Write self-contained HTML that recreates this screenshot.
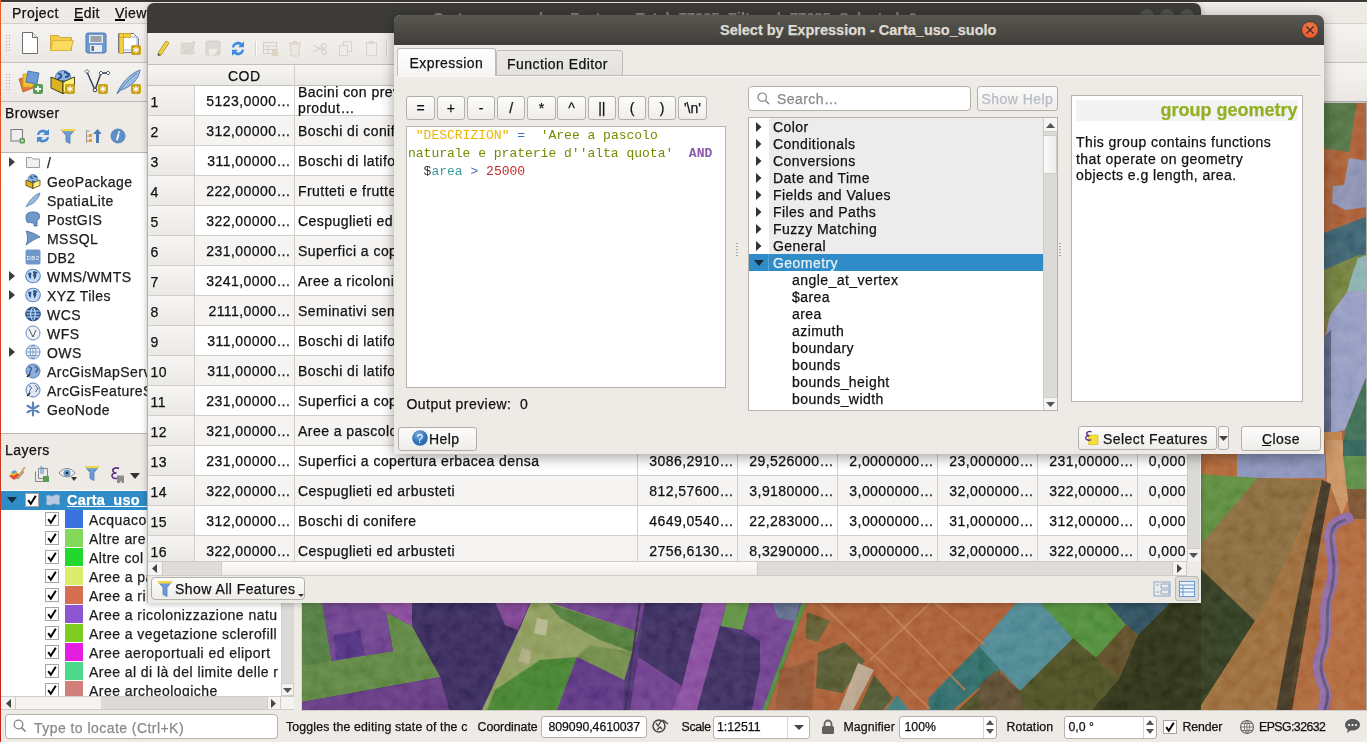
<!DOCTYPE html>
<html><head><meta charset="utf-8">
<style>
*{box-sizing:border-box;margin:0;padding:0}
html,body{width:1367px;height:742px;overflow:hidden}
body{position:relative;background:#eeebe7;font-family:"Liberation Sans",sans-serif;font-size:14px;letter-spacing:.45px;color:#1c1c1c;-webkit-text-stroke:.25px}
.a{position:absolute;line-height:0}
.t{position:absolute;white-space:nowrap;line-height:1}
svg{display:block}
.hl{position:absolute;height:1px;background:#cdcac5}
.vl{position:absolute;width:1px;background:#cdcac5}
.white{position:absolute;background:#fff}
.btn{position:absolute;border:1px solid #b3afa9;border-radius:3px;background:linear-gradient(#fcfcfb,#efedea)}
.mono{font-family:"Liberation Mono",monospace;font-size:13px;letter-spacing:0;-webkit-text-stroke:0}
.sb{position:absolute;background:#efedea}
</style></head><body>

<!-- ================= MAIN WINDOW ================= -->
<div class="a" style="left:0;top:0;width:1367px;height:2px;background:#3c3b37"></div>
<div class="a" style="left:0;top:2px;width:1367px;height:1px;background:#f7f6f4"></div>
<!-- toolbar bg -->
<div class="a" style="left:1px;top:24px;width:1366px;height:38px;background:linear-gradient(#f5f3f0,#ebe8e4)"></div><div class="a" style="left:1px;top:63px;width:1366px;height:38px;background:linear-gradient(#f5f3f0,#ebe8e4)"></div>
<div class="t" style="left:12px;top:6px;color:#111">Project</div>
<div class="t" style="left:74px;top:6px;color:#111">Edit</div>
<div class="t" style="left:115px;top:6px;color:#111">View</div>
<div class="a" style="left:34.5px;top:19.2px;width:3px;height:1.5px;background:#000"></div>
<div class="a" style="left:73.5px;top:19.2px;width:9px;height:1.5px;background:#000"></div>
<div class="a" style="left:115px;top:19.2px;width:10px;height:1.5px;background:#000"></div>
<div class="hl" style="left:1px;top:23px;width:1366px;background:#d3d0cb"></div>
<div class="hl" style="left:1px;top:62px;width:1366px;background:#c4c1bc"></div>
<div class="hl" style="left:1px;top:101px;width:1366px;background:#bdbab5"></div>
<!-- grips -->
<div class="a" style="left:5px;top:34px;width:5px;height:17px;background:radial-gradient(circle,#a9a6a0 0.6px,transparent 0.9px) 0 0/3px 3px"></div>
<div class="a" style="left:5px;top:73px;width:5px;height:17px;background:radial-gradient(circle,#a9a6a0 0.6px,transparent 0.9px) 0 0/3px 3px"></div>
<!-- toolbar icons row 1 -->
<div class="a" style="left:21px;top:31px"><svg width="18" height="24"><path d="M1.5 1.5h10l5 5v16h-15z" fill="#fff" stroke="#6d6d6d"/><path d="M11.5 1.5v5h5" fill="#eee" stroke="#6d6d6d"/></svg></div>
<div class="a" style="left:49px;top:33px"><svg width="26" height="20"><path d="M1.5 2.5h8l2 2h11v13h-21z" fill="#f3cb4a" stroke="#d2a93a"/><path d="M4 7.5h20.5l-3 10h-20z" fill="#fbdc5e" stroke="#d8b440"/></svg></div>
<div class="a" style="left:85px;top:32px"><svg width="22" height="22"><rect x="1" y="1" width="20" height="20" rx="2" fill="#6b9bd4" stroke="#4f7bb3"/><rect x="4" y="3" width="14" height="8" fill="#e8ecf0"/><path d="M5.5 5h11M5.5 7h11M5.5 9h11" stroke="#556"/><rect x="5" y="13" width="12" height="7" fill="#e8ecf0"/><rect x="6.5" y="14" width="2.5" height="5" fill="#4f6f9a"/></svg></div>
<div class="a" style="left:117px;top:31px"><svg width="26" height="25"><path d="M1.5 2.5h15l5 5v14h-20z" fill="#fff" stroke="#777"/><rect x="4" y="6" width="16" height="13" fill="none" stroke="#8fb0e8"/><path d="M2.5 2.5h4v20h-4zM2.5 2.5h11v4h-11z" fill="#f6cf3e" stroke="#c9a22a" stroke-width=".8"/><rect x="14" y="14" width="10" height="10" rx="2" fill="#c8a31a"/><path d="M19 15.8v6.4M16.2 17.4l5.6 3.2M16.2 20.6l5.6-3.2" stroke="#fff" stroke-width="1.2"/></svg></div>
<!-- toolbar icons row 2 -->
<div class="a" style="left:17px;top:69px"><svg width="28" height="26"><path d="M2 10l10-3 4 12-10 4z" fill="#e07a38" stroke="#b85a20" stroke-width=".8"/><path d="M6 5h10v13h-10z" fill="#f1c232" stroke="#c9a22a" stroke-width=".8"/><path d="M11 2l11 2-2 11-11-2z" fill="#6a9bd6" stroke="#3f6aa0" stroke-width=".8"/><rect x="16" y="15" width="10" height="10" rx="2" fill="#5a9c55"/><path d="M21 17v6M18 20h6" stroke="#fff" stroke-width="1.8"/></svg></div>
<div class="a" style="left:48px;top:67px"><svg width="28" height="28"><circle cx="15" cy="11.5" r="8" fill="#8fb3e0" stroke="#4a72a8" stroke-width=".8"/><path d="M10 7c2-1 4 1 3 3-1 1-3 1-3 3M16 5c2 0 3 2 5 2 0 2-2 3-4 3M13 15c1-1 3-1 4 0" stroke="#2c548c" stroke-width="2" fill="none"/><path d="M3 10l12 5v11.7L3 21z" fill="#d8b420" stroke="#3a3208" stroke-width=".9" stroke-linejoin="round"/><path d="M15 15l11.5-5v11l-11.5 5.7z" fill="#fbf07a" stroke="#3a3208" stroke-width=".9" stroke-linejoin="round"/><rect x="17" y="17" width="10" height="10" rx="2" fill="#c8a31a"/><path d="M22 18.8v6.4M19.2 20.4l5.6 3.2M19.2 23.6l5.6-3.2" stroke="#fff" stroke-width="1.2"/></svg></div>
<div class="a" style="left:83px;top:68px"><svg width="28" height="28"><path d="M4 4l8 18 6-17 8 0" fill="none" stroke="#2c3e50" stroke-width="1.4"/><circle cx="12" cy="22" r="1.8" fill="#fff" stroke="#2c3e50"/><path d="M4 1.5l2 2-2 2-2-2zM18 3l2 2-2 2-2-2zM25 3l2 2-2 2-2-2z" fill="#fff" stroke="#2c3e50" stroke-width=".8"/><rect x="15" y="16" width="10" height="10" rx="2" fill="#c8a31a"/><path d="M20 17.8v6.4M17.2 19.4l5.6 3.2M17.2 22.6l5.6-3.2" stroke="#fff" stroke-width="1.2"/></svg></div>
<div class="a" style="left:115px;top:68px"><svg width="28" height="28"><path d="M2 26C5 17 14 6 25 2c-1 9-9 17-19 20z" fill="#9cbbe0" stroke="#4f78aa" stroke-width=".9"/><path d="M2 26C8 18 15 10 22 5" stroke="#4f78aa" stroke-width=".8" fill="none"/><rect x="16" y="16" width="10" height="10" rx="2" fill="#c8a31a"/><path d="M21 17.8v6.4M18.2 19.4l5.6 3.2M18.2 22.6l5.6-3.2" stroke="#fff" stroke-width="1.2"/></svg></div>

<!-- browser dock -->
<div class="t" style="left:5px;top:105.5px;color:#111">Browser</div>
<div class="a" style="left:10px;top:128px"><svg width="16" height="17"><rect x="1" y="1.5" width="11.5" height="11.5" fill="#eeeeee" stroke="#7a7a7a"/><rect x="9.5" y="10" width="5.5" height="5.5" rx="1.5" fill="#5b9a55"/><circle cx="12.25" cy="12.75" r="1.5" fill="#b8d8b0"/></svg></div>
<div class="a" style="left:35px;top:128px"><svg width="16" height="16"><path d="M2 7a6 6 0 0 1 10-4l2-2v6h-6l2-2a4 4 0 0 0-6 2zM14 9a6 6 0 0 1-10 4l-2 2v-6h6l-2 2a4 4 0 0 0 6-2z" fill="#4a8ad4"/></svg></div>
<div class="a" style="left:60px;top:128px"><svg width="16" height="16"><path d="M1 1.5h14l-5 6v8l-4-2v-6z" fill="#6b9bd4" stroke="#4f7bb3" stroke-width=".8"/><rect x="1" y="1" width="14" height="2.2" fill="#f3d54a"/></svg></div>
<div class="a" style="left:85px;top:128px"><svg width="16" height="16"><path d="M1.5 2v13M1.5 3h3M1.5 8h3M1.5 13h3" stroke="#999" fill="none"/><rect x="4" y="6" width="3" height="3" fill="#f39c12"/><rect x="4" y="11" width="3" height="3" fill="#f39c12"/><path d="M11 15V6h-3l4.5-5 4.5 5h-3v9z" fill="#4f7bb3"/></svg></div>
<div class="a" style="left:110px;top:128px"><svg width="16" height="16"><circle cx="8" cy="8" r="7" fill="#5f8fc8" stroke="#4a78b0" stroke-width=".8"/><path d="M8.5 6.5l-1.5 5M9 4.2v.2" stroke="#fff" stroke-width="1.8" stroke-linecap="round"/></svg></div>
<div class="hl" style="left:1px;top:152px;width:297px;background:#b9b5b0"></div>
<div class="white" style="left:1px;top:153px;width:297px;height:280px"></div>
<div class="hl" style="left:1px;top:433px;width:297px;background:#b9b5b0"></div>
<div class="a" style="left:9px;top:157px;line-height:0"><svg width="6" height="10"><path d="M0 0l6 5-6 5z" fill="#3c3c3c"/></svg></div>
<div class="a" style="left:25px;top:154px;line-height:0"><svg width="16" height="16"><path d="M1.5 3.5h5l1.5 1.5h6.5v8.5h-13z" fill="#f1f0ee" stroke="#a09d98"/></svg></div>
<div class="t" style="left:47px;top:156px">/</div>
<div class="a" style="left:25px;top:173px;line-height:0"><svg width="16" height="16"><circle cx="8" cy="6.5" r="5" fill="#8fb3e0" stroke="#4a72a8" stroke-width=".7"/><path d="M5 4c1.5-.5 2.5.5 2 2M9 3c1 .5 2 1 3 1M7 8.5c1 0 2 0 2.5-.5" stroke="#2c548c" stroke-width="1.4" fill="none"/><path d="M1 7l7 3v5.5L1 12.5z" fill="#d8b420" stroke="#3a3208" stroke-width=".7" stroke-linejoin="round"/><path d="M8 10l7-3v5.5L8 15.5z" fill="#fbf07a" stroke="#3a3208" stroke-width=".7" stroke-linejoin="round"/></svg></div>
<div class="t" style="left:47px;top:175px">GeoPackage</div>
<div class="a" style="left:25px;top:192px;line-height:0"><svg width="16" height="16"><path d="M1 15C4 9 9 3 15 1c-1 5-6 11-11 12z" fill="#9ab8dc" stroke="#5078a8" stroke-width=".8"/></svg></div>
<div class="t" style="left:47px;top:194px">SpatiaLite</div>
<div class="a" style="left:25px;top:211px;line-height:0"><svg width="16" height="16"><path d="M3 2c3-1.5 7-1.5 10 0 2 1 2 4 1 6-1 1-2 1-2 3v4h-3v-3c-1 0-3 0-4-1-1 1-2 1-3 0C1 9 0 4 3 2z" fill="#6f97c9" stroke="#40689c" stroke-width=".8"/></svg></div>
<div class="t" style="left:47px;top:213px">PostGIS</div>
<div class="a" style="left:25px;top:230px;line-height:0"><svg width="16" height="16"><path d="M1 1c5 1 10 3 14 6-3 1-7 3-14 8 2-4 2-10 0-14z" fill="#6f97c9" stroke="#40689c" stroke-width=".8"/></svg></div>
<div class="t" style="left:47px;top:232px">MSSQL</div>
<div class="a" style="left:25px;top:249px;line-height:0"><svg width="16" height="16"><rect x="0.5" y="0.5" width="15" height="15" rx="2" fill="#6f97c9"/><text x="8" y="10.5" font-size="6" fill="#fff" text-anchor="middle" font-family="Liberation Sans">DB2</text></svg></div>
<div class="t" style="left:47px;top:251px">DB2</div>
<div class="a" style="left:9px;top:271px;line-height:0"><svg width="6" height="10"><path d="M0 0l6 5-6 5z" fill="#3c3c3c"/></svg></div>
<div class="a" style="left:25px;top:268px;line-height:0"><svg width="16" height="16"><ellipse cx="8" cy="8" rx="7.3" ry="6.8" fill="#c6daf0" stroke="#5a88c0" stroke-width="1.1"/><path d="M3 5.5c1-1 3-1.5 3.5 0 .3 1-1 1.2-.5 2.5.4 1.3 0 2.5-.8 3-.5-1.5-1.8-2-1.5-3.5zM8 3.5c1.5-.5 3 0 4.5 1 .5 1-1 1-1.5 1.5-.2.8 1 1.5.2 2.5-.8 1.2-1 2.5-1.8 3-.5-1.5-.3-3-1.2-3.5-.8-.8.2-1.5.5-2-.5-.8-1-1.5-.7-2.5z" fill="#2c548c"/></svg></div>
<div class="t" style="left:47px;top:270px">WMS/WMTS</div>
<div class="a" style="left:9px;top:290px;line-height:0"><svg width="6" height="10"><path d="M0 0l6 5-6 5z" fill="#3c3c3c"/></svg></div>
<div class="a" style="left:25px;top:287px;line-height:0"><svg width="16" height="16"><ellipse cx="8" cy="8" rx="7.3" ry="6.8" fill="#c6daf0" stroke="#5a88c0" stroke-width="1.1"/><path d="M3 5.5c1-1 3-1.5 3.5 0 .3 1-1 1.2-.5 2.5.4 1.3 0 2.5-.8 3-.5-1.5-1.8-2-1.5-3.5zM8 3.5c1.5-.5 3 0 4.5 1 .5 1-1 1-1.5 1.5-.2.8 1 1.5.2 2.5-.8 1.2-1 2.5-1.8 3-.5-1.5-.3-3-1.2-3.5-.8-.8.2-1.5.5-2-.5-.8-1-1.5-.7-2.5z" fill="#2c548c"/></svg></div>
<div class="t" style="left:47px;top:289px">XYZ Tiles</div>
<div class="a" style="left:25px;top:306px;line-height:0"><svg width="16" height="16"><ellipse cx="8" cy="8" rx="7.3" ry="6.8" fill="#2d5a94" stroke="#1e3f6e" stroke-width="1"/><path d="M1.5 5h13M1.5 8h13M1.5 11h13" stroke="#8fb3e0" stroke-width="1.3"/><path d="M8 1.5c-3 2-3 11 0 13M8 1.5c3 2 3 11 0 13" stroke="#d8e6f6" stroke-width="1" fill="none"/></svg></div>
<div class="t" style="left:47px;top:308px">WCS</div>
<div class="a" style="left:25px;top:325px;line-height:0"><svg width="16" height="16"><circle cx="8" cy="8" r="7" fill="#eef2f8" stroke="#6a8fc0"/><path d="M4 4l4 8 3-7" stroke="#555" fill="none"/></svg></div>
<div class="t" style="left:47px;top:327px">WFS</div>
<div class="a" style="left:9px;top:347px;line-height:0"><svg width="6" height="10"><path d="M0 0l6 5-6 5z" fill="#3c3c3c"/></svg></div>
<div class="a" style="left:25px;top:344px;line-height:0"><svg width="16" height="16"><circle cx="8" cy="8" r="7" fill="#eef2f8" stroke="#6a8fc0"/><path d="M1 8h14M8 1v14M2.5 4.5h11M2.5 11.5h11M8 1c-4 3-4 11 0 14M8 1c4 3 4 11 0 14" stroke="#6a8fc0" stroke-width=".8" fill="none"/></svg></div>
<div class="t" style="left:47px;top:346px">OWS</div>
<div class="a" style="left:25px;top:363px;line-height:0"><svg width="16" height="16"><circle cx="8" cy="8" r="7" fill="#8fb0da" stroke="#5a7fb0"/><path d="M4 4c2 0 3 2 2 3s-2 2-1 4M10 3c1 2 3 2 3 4-1 0-2 1-2 3" stroke="#3a5f90" stroke-width="1.3" fill="none"/><path d="M2 14l3-3" stroke="#222" stroke-width="1.5"/></svg></div>
<div class="t" style="left:47px;top:365px">ArcGisMapServer</div>
<div class="a" style="left:25px;top:382px;line-height:0"><svg width="16" height="16"><circle cx="8" cy="8" r="7" fill="#dfe8f4" stroke="#5a7fb0"/><path d="M4 4c2 0 3 2 2 3s-2 2-1 4M10 3c1 2 3 2 3 4-1 0-2 1-2 3" stroke="#3a5f90" stroke-width="1" fill="none"/><path d="M2 14l3-3" stroke="#222" stroke-width="1.5"/></svg></div>
<div class="t" style="left:47px;top:384px">ArcGisFeatureServer</div>
<div class="a" style="left:25px;top:401px;line-height:0"><svg width="16" height="16"><g stroke="#5a84bb" stroke-width="2.2" stroke-linecap="round"><path d="M8 1.5v13M2.5 4.8l11 6.4M2.5 11.2l11-6.4"/></g></svg></div>
<div class="t" style="left:47px;top:403px">GeoNode</div>

<!-- layers dock -->
<div class="t" style="left:5px;top:443.3px;color:#111">Layers</div>
<div class="a" style="left:8px;top:466px"><svg width="18" height="16"><path d="M1 10l7-4 4 3-6 5z" fill="#e74c3c"/><path d="M2 8l5-3 3 2-5 3z" fill="#f1c40f"/><path d="M3 6l4-2 2 2-4 2z" fill="#6b9bd4"/><path d="M8 12l6-7 2 1-6 7z" fill="#c9a06a" stroke="#8a6a3a" stroke-width=".5"/><path d="M14 5l3-4" stroke="#c9a06a" stroke-width="1.5"/></svg></div>
<div class="a" style="left:34px;top:465px"><svg width="16" height="18"><path d="M1.5 6.5v10h9M4.5 3.5v10h9v-10z" fill="none" stroke="#888"/><path d="M7 1v8M9 2v7" stroke="#6b9bd4" stroke-width="1.2"/><rect x="9" y="11" width="6" height="6" fill="#5a9c55"/></svg></div>
<div class="a" style="left:58px;top:466px"><svg width="20" height="16"><path d="M1 7c4-6 12-6 16 0-4 5-12 5-16 0z" fill="#eee" stroke="#888"/><circle cx="9" cy="7" r="3.5" fill="#6b9bd4"/><circle cx="9" cy="7" r="1.3" fill="#222"/><path d="M13 11h6l-3 4z" fill="#333"/></svg></div>
<div class="a" style="left:84px;top:465px"><svg width="16" height="17"><path d="M1 1.5h14l-5 6v8l-4-2v-6z" fill="#6b9bd4" stroke="#4f7bb3" stroke-width=".8"/><rect x="1" y="1" width="14" height="2.2" fill="#f3d54a"/></svg></div>
<div class="a" style="left:110px;top:466px"><svg width="17" height="18"><path d="M9 2.5C6 1 2 2.5 3 5.2 3.5 6.6 5.2 6.9 6.4 6.9 4.2 6.9 1.5 7.7 2 10.2 2.5 12.8 6.2 13 8.6 11.8" fill="none" stroke="#5c2d82" stroke-width="1.6"/><path d="M7 9.5h7v7.5h-2l-1-2.5-1 2.5h-3z" fill="#8c8c8c"/></svg></div>
<div class="a" style="left:130px;top:473px"><svg width="10" height="6"><path d="M0 0h10l-5 6z" fill="#333"/></svg></div>
<div class="white" style="left:1px;top:490px;width:280px;height:206px"></div>
<div class="a" style="left:1px;top:491px;width:280px;height:19px;background:#308cc6"></div>
<div class="a" style="left:7px;top:497px"><svg width="10" height="6"><path d="M0 0h10l-5 6z" fill="#152a3a"/></svg></div>
<div class="a" style="left:25px;top:493px"><svg width="14" height="14"><rect x=".5" y=".5" width="13" height="13" fill="#fff" stroke="#a8a49e"/><path d="M3.2 7.2l2.6 3.6L10.8 2.8" stroke="#000" stroke-width="2" fill="none"/></svg></div>
<div class="a" style="left:45px;top:494px"><svg width="16" height="12"><path d="M1 2c3-2 5 1 7 0s4-2 7 0c-1 3-1 5 0 8-3 2-5-1-7 0s-4 2-7 0c1-3 1-5 0-8z" fill="#b9cbe0" stroke="#8aa4c4" stroke-width=".6"/></svg></div>
<div class="t" style="left:67px;top:493px;color:#fff;font-weight:bold;font-size:14.5px;letter-spacing:.2px;text-decoration:underline">Carta_uso_suolo</div>
<div class="a" style="left:45px;top:512px;line-height:0"><svg width="14" height="14"><rect x=".5" y=".5" width="13" height="13" fill="#fff" stroke="#a8a49e"/><path d="M3.2 7.2l2.6 3.6L10.8 2.8" stroke="#000" stroke-width="2" fill="none"/></svg></div>
<div class="a" style="left:65px;top:510px;width:18px;height:18px;background:#3a72e0"></div>
<div class="t" style="left:89px;top:513px">Acquaco</div>
<div class="a" style="left:45px;top:531px;line-height:0"><svg width="14" height="14"><rect x=".5" y=".5" width="13" height="13" fill="#fff" stroke="#a8a49e"/><path d="M3.2 7.2l2.6 3.6L10.8 2.8" stroke="#000" stroke-width="2" fill="none"/></svg></div>
<div class="a" style="left:65px;top:529px;width:18px;height:18px;background:#84d85a"></div>
<div class="t" style="left:89px;top:532px">Altre are</div>
<div class="a" style="left:45px;top:550px;line-height:0"><svg width="14" height="14"><rect x=".5" y=".5" width="13" height="13" fill="#fff" stroke="#a8a49e"/><path d="M3.2 7.2l2.6 3.6L10.8 2.8" stroke="#000" stroke-width="2" fill="none"/></svg></div>
<div class="a" style="left:65px;top:548px;width:18px;height:18px;background:#22d82e"></div>
<div class="t" style="left:89px;top:551px">Altre col</div>
<div class="a" style="left:45px;top:569px;line-height:0"><svg width="14" height="14"><rect x=".5" y=".5" width="13" height="13" fill="#fff" stroke="#a8a49e"/><path d="M3.2 7.2l2.6 3.6L10.8 2.8" stroke="#000" stroke-width="2" fill="none"/></svg></div>
<div class="a" style="left:65px;top:567px;width:18px;height:18px;background:#dceb6c"></div>
<div class="t" style="left:89px;top:570px">Aree a pa</div>
<div class="a" style="left:45px;top:588px;line-height:0"><svg width="14" height="14"><rect x=".5" y=".5" width="13" height="13" fill="#fff" stroke="#a8a49e"/><path d="M3.2 7.2l2.6 3.6L10.8 2.8" stroke="#000" stroke-width="2" fill="none"/></svg></div>
<div class="a" style="left:65px;top:586px;width:18px;height:18px;background:#d66e52"></div>
<div class="t" style="left:89px;top:589px">Aree a ri</div>
<div class="a" style="left:45px;top:607px;line-height:0"><svg width="14" height="14"><rect x=".5" y=".5" width="13" height="13" fill="#fff" stroke="#a8a49e"/><path d="M3.2 7.2l2.6 3.6L10.8 2.8" stroke="#000" stroke-width="2" fill="none"/></svg></div>
<div class="a" style="left:65px;top:605px;width:18px;height:18px;background:#8e55d0"></div>
<div class="t" style="left:89px;top:608px">Aree a ricolonizzazione natu</div>
<div class="a" style="left:45px;top:626px;line-height:0"><svg width="14" height="14"><rect x=".5" y=".5" width="13" height="13" fill="#fff" stroke="#a8a49e"/><path d="M3.2 7.2l2.6 3.6L10.8 2.8" stroke="#000" stroke-width="2" fill="none"/></svg></div>
<div class="a" style="left:65px;top:624px;width:18px;height:18px;background:#7ccc22"></div>
<div class="t" style="left:89px;top:627px">Aree a vegetazione sclerofill</div>
<div class="a" style="left:45px;top:645px;line-height:0"><svg width="14" height="14"><rect x=".5" y=".5" width="13" height="13" fill="#fff" stroke="#a8a49e"/><path d="M3.2 7.2l2.6 3.6L10.8 2.8" stroke="#000" stroke-width="2" fill="none"/></svg></div>
<div class="a" style="left:65px;top:643px;width:18px;height:18px;background:#e41ee0"></div>
<div class="t" style="left:89px;top:646px">Aree aeroportuali ed eliport</div>
<div class="a" style="left:45px;top:664px;line-height:0"><svg width="14" height="14"><rect x=".5" y=".5" width="13" height="13" fill="#fff" stroke="#a8a49e"/><path d="M3.2 7.2l2.6 3.6L10.8 2.8" stroke="#000" stroke-width="2" fill="none"/></svg></div>
<div class="a" style="left:65px;top:662px;width:18px;height:18px;background:#4ed98a"></div>
<div class="t" style="left:89px;top:665px">Aree al di là del limite delle r</div>
<div class="a" style="left:45px;top:683px;line-height:0"><svg width="14" height="14"><rect x=".5" y=".5" width="13" height="13" fill="#fff" stroke="#a8a49e"/><path d="M3.2 7.2l2.6 3.6L10.8 2.8" stroke="#000" stroke-width="2" fill="none"/></svg></div>
<div class="a" style="left:65px;top:681px;width:18px;height:18px;background:#d27f7a"></div>
<div class="t" style="left:89px;top:684px">Aree archeologiche</div>
<!-- layers scrollbars -->
<div class="a" style="left:281px;top:490px;width:13px;height:206px;background:#dcdad6;border-left:1px solid #d0cdc8"></div>
<div class="a" style="left:281px;top:683px;width:13px;height:13px;background:#f4f3f1;border:1px solid #d0cdc8"></div>
<div class="a" style="left:283px;top:688px"><svg width="9" height="5"><path d="M0 0h9l-4.5 5z" fill="#555"/></svg></div>
<div class="a" style="left:1px;top:696px;width:293px;height:14px;background:#f4f3f1;border-top:1px solid #d0cdc8;border-bottom:1px solid #d0cdc8"></div>
<div class="a" style="left:101px;top:697px;width:166px;height:12px;background:#dcdad6"></div>
<div class="a" style="left:15px;top:696px;width:1px;height:14px;background:#d0cdc8"></div>
<div class="a" style="left:267px;top:696px;width:1px;height:14px;background:#d0cdc8"></div>
<div class="a" style="left:280px;top:696px;width:1px;height:14px;background:#d0cdc8"></div>
<div class="a" style="left:6px;top:699px"><svg width="5" height="9"><path d="M5 0v9L0 4.5z" fill="#444"/></svg></div>
<div class="a" style="left:271px;top:699px"><svg width="5" height="9"><path d="M0 0v9l5-4.5z" fill="#444"/></svg></div>

<!-- status bar -->
<div class="a" style="left:5px;top:714px;width:273px;height:25px;background:#fff;border:1px solid #b5b1ab;border-radius:4px"></div>
<div class="a" style="left:13px;top:719px"><svg width="14" height="14"><circle cx="5.5" cy="5.5" r="4.3" fill="none" stroke="#858585" stroke-width="1.3"/><path d="M8.6 8.6l4 4" stroke="#858585" stroke-width="1.5"/></svg></div>
<div class="t" style="left:34px;top:720.5px;color:#8a8a8a">Type to locate (Ctrl+K)</div>
<div class="a" style="left:286px;top:712px;width:182px;height:28px;overflow:hidden"><div class="t" style="left:0;top:8.5px;font-size:12.3px;letter-spacing:.15px;color:#111">Toggles the editing state of the current layer</div></div>
<div class="t" style="left:477.5px;top:720.5px;font-size:12.3px;letter-spacing:0;color:#111">Coordinate</div>
<div class="a" style="left:541px;top:715.5px;width:106px;height:22px;background:#fff;border:1px solid #b5b1ab;border-radius:3px"></div>
<div class="t" style="left:548.5px;top:720.5px;font-size:12.3px;letter-spacing:-.05px;color:#111">809090,4610037</div>
<div class="a" style="left:651px;top:717px"><svg width="18" height="18"><circle cx="8" cy="9" r="6" fill="none" stroke="#444" stroke-width="1.5"/><path d="M5 6l2 3 3-5M6 13l3-3 2 2" stroke="#444" stroke-width="1.3" fill="none"/><path d="M12 3l5 4" stroke="#444" stroke-width="1.5"/></svg></div>
<div class="t" style="left:681.5px;top:720.5px;font-size:12.3px;letter-spacing:-.3px;color:#111">Scale</div>
<div class="a" style="left:713px;top:715.5px;width:97px;height:23px;background:#fff;border:1px solid #b5b1ab;border-radius:3px"></div>
<div class="a" style="left:787px;top:716px;width:1px;height:22px;background:#d6d3ce"></div>
<div class="t" style="left:717px;top:720.5px;font-size:12.3px;letter-spacing:0;color:#111">1:12511</div>
<div class="a" style="left:794px;top:725px"><svg width="10" height="5"><path d="M0 0h10l-5 5z" fill="#444"/></svg></div>
<div class="a" style="left:821px;top:719px"><svg width="14" height="15"><path d="M3.5 7V5a3.5 3.5 0 0 1 7 0v2" fill="none" stroke="#616161" stroke-width="1.8"/><rect x="1" y="7" width="12" height="8" rx="1.5" fill="#616161"/></svg></div>
<div class="t" style="left:843.5px;top:720.5px;font-size:12.3px;letter-spacing:.1px;color:#111">Magnifier</div>
<div class="a" style="left:899px;top:715.5px;width:98px;height:23px;background:#fff;border:1px solid #b5b1ab;border-radius:3px"></div>
<div class="t" style="left:904.5px;top:720.5px;font-size:12.3px;letter-spacing:0;color:#111">100%</div>
<div class="a" style="left:982.5px;top:716px;width:1px;height:22px;background:#d6d3ce"></div>
<div class="a" style="left:985px;top:719px"><svg width="10" height="16"><path d="M1 6l4-5 4 5zM1 10l4 5 4-5z" fill="#555"/></svg></div>
<div class="t" style="left:1006.5px;top:720.5px;font-size:12.3px;letter-spacing:.1px;color:#111">Rotation</div>
<div class="a" style="left:1063.5px;top:715.5px;width:93px;height:23px;background:#fff;border:1px solid #b5b1ab;border-radius:3px"></div>
<div class="t" style="left:1068.5px;top:720.5px;font-size:12.3px;letter-spacing:0;color:#111">0,0 °</div>
<div class="a" style="left:1142.5px;top:716px;width:1px;height:22px;background:#d6d3ce"></div>
<div class="a" style="left:1145px;top:719px"><svg width="10" height="16"><path d="M1 6l4-5 4 5zM1 10l4 5 4-5z" fill="#555"/></svg></div>
<div class="a" style="left:1163px;top:720px"><svg width="14" height="14"><rect x=".5" y=".5" width="13" height="13" fill="#fff" stroke="#a8a49e"/><path d="M3.2 7.2l2.6 3.6L10.8 2.8" stroke="#000" stroke-width="2" fill="none"/></svg></div>
<div class="t" style="left:1182.5px;top:720.5px;font-size:12.3px;letter-spacing:-.1px;color:#111">Render</div>
<div class="a" style="left:1239px;top:719px"><svg width="16" height="16"><circle cx="8" cy="8" r="6.5" fill="none" stroke="#666" stroke-width="1.2"/><path d="M1.5 8h13M8 1.5v13M3 4.5h10M3 11.5h10M8 1.5c-3.5 3-3.5 10 0 13M8 1.5c3.5 3 3.5 10 0 13" stroke="#666" stroke-width=".8" fill="none"/></svg></div>
<div class="t" style="left:1259px;top:720.5px;font-size:12.3px;letter-spacing:-.55px;color:#111">EPSG:32632</div>
<div class="a" style="left:1344px;top:718px"><svg width="17" height="16"><path d="M8.5 1c4.4 0 7.5 2.6 7.5 5.8s-3.1 5.8-7.5 5.8c-.8 0-1.5-.1-2.2-.2L3 15l.8-3.4C2 10.5 1 8.8 1 6.8 1 3.6 4.1 1 8.5 1z" fill="#5a5a5a"/><circle cx="5" cy="7" r="1.1" fill="#fff"/><circle cx="8.5" cy="7" r="1.1" fill="#fff"/><circle cx="12" cy="7" r="1.1" fill="#fff"/></svg></div>

<!-- ================= MAP ================= -->
<div class="a" style="left:301px;top:101px;width:1066px;height:1px;background:#aeaca8"></div><div class="a" style="left:301px;top:102px;width:1066px;height:1px;background:#c6c4c0"></div>
<div class="a" style="left:1366px;top:101px;width:1px;height:610px;background:#b0aeaa"></div>
<div class="a" style="left:301px;top:103px;width:1px;height:607px;background:#d9d7d3"></div>
<div class="a" style="left:301px;top:710px;width:1066px;height:1px;background:#cfcdc9"></div>
<div class="a" style="left:302px;top:103px;width:1064px;height:607px;overflow:hidden">
<svg width="1064" height="607" viewBox="302 103 1064 607" shape-rendering="geometricPrecision">
<rect x="302" y="101" width="1065" height="609" fill="#8a5a35"/>
<!-- ===== right strip (x>=1324, y<460) ===== -->
<polygon points="1324,101 1367,101 1367,460 1324,460" fill="#a85c34"/>
<polygon points="1324,101 1357,101 1349,152 1324,148.5" fill="#4f7040"/>
<polygon points="1349,158 1367,161 1367,207 1345,210 1332,203 1333,186 1344,185" fill="#8a8fb0"/>
<polygon points="1324,233 1367,216 1367,255 1324,270" fill="#3a5f6e"/>
<polygon points="1324,270 1358.5,255 1367,255 1367,292 1347,292 1330,315 1324.5,337" fill="#717f3c"/>
<polygon points="1358,258 1367,255 1367,290 1347,292 1352,275" fill="#86aeae"/>
<polygon points="1347,292 1367,290 1367,375 1345,430 1325,435 1325,337 1330,315" fill="#939ac0"/>
<polygon points="1324,337 1331,330 1331,434 1324,435" fill="#5d6484"/>
<polygon points="1367,375 1367,460 1342,460 1345,430" fill="#3a6a50"/>
<polygon points="1324,432 1342,432 1342,460 1324,460" fill="#c08448"/>
<!-- ===== lower right (x 1200-1367, y 454-710) ===== -->
<polygon points="1200,440 1367,440 1367,710 1200,710" fill="#b0663a"/>
<polygon points="1200,454 1237,454 1237,476 1200,474" fill="#b06636"/>
<polygon points="1237,454 1325,454 1325,478 1258,478 1237,477" fill="#8890b8"/>
<polygon points="1325,440 1343,440 1348,500 1340,519 1328,500" fill="#c89060"/>
<polygon points="1343,440 1367,440 1367,456 1343,456" fill="#2e6058"/>
<polygon points="1343,456 1367,456 1367,489 1347,489" fill="#5a8a44"/>
<polygon points="1347,489 1367,489 1367,519 1350,519" fill="#7a5030"/>
<polygon points="1200,474 1258,478 1200,546" fill="#5b8a3c"/>
<polygon points="1258,478 1322,480 1266,605 1255,621 1200,568 1200,546" fill="#86683a"/>
<polygon points="1200,568 1255,621 1197,712" fill="#2f3a20"/>
<polygon points="1322,480 1326,480 1285,712 1197,712 1255,621 1266,605" fill="#9a6a38"/>
<polygon points="1322,480 1330,485 1292,712 1280,712" fill="#4a3a22"/>
<polygon points="1330,485 1343,519 1324,530 1320,712 1292,712" fill="#aa6538"/>
<path d="M1348,518 C1338,520 1328,526 1330,540 C1333,560 1336,575 1328,595 C1322,612 1330,630 1322,650 C1314,668 1320,675 1325,690 C1327,700 1324,706 1322,712" fill="none" stroke="#8c68a4" stroke-width="11" stroke-linecap="round"/>
<path d="M1346,520 C1336,522 1330,528 1331,540 C1334,560 1336,575 1330,595 C1324,612 1331,630 1324,650 C1318,668 1322,675 1327,690 C1329,700 1326,706 1324,712" fill="none" stroke="#5e5078" stroke-width="3"/>
<polygon points="1322,480 1331,484 1316,560 1296,660 1287,712 1276,712 1287,650 1305,560" fill="#3e3422"/>
<!-- ===== bottom strip (y 602-710) ===== -->
<rect x="302" y="602" width="500" height="108" fill="#4a3070"/>
<polygon points="302,602 322,602 331.6,661 393,651 386,612 412,626 440.5,677 302,702" fill="#5c8340"/>
<polygon points="302,602 322,602 331,661 302,666" fill="#4f7a3e"/>
<polygon points="322,602 374,602 386,612 393,651 331.6,661" fill="#6a3f8a"/>
<polygon points="334,635 360,630 365,655 336,660" fill="#4f3080"/>
<polygon points="374,602 412,602 412,626 386,612" fill="#87489a"/>
<polygon points="412,602 530,602 518,630 481,710 449,710 440.5,677 412,626" fill="#36295a"/>
<polygon points="495,602 530,602 518,630 505,625" fill="#7a3f8e"/>
<polygon points="302,702 440.5,677 449,710 302,710" fill="#62377f"/>
<polygon points="548,602 645,602 638,632" fill="#6a3f8a"/>
<polygon points="531,602 548,602 638,632 624,680 577,657 557,710 482,710 520,628" fill="#8c9a5a"/>
<polygon points="548,603 638,632 632,652 600,640 560,618" fill="#4f7a38"/>
<polygon points="590,645 632,652 624,680 577,657" fill="#6f8a48"/>
<polygon points="495,690 540,660 577,657 557,710 487,710" fill="#43802f"/>
<polygon points="537,618 548,620 546,636 534,633" fill="#b4b488"/>
<polygon points="522,648 532,651 529,664 518,661" fill="#aaa67c"/>
<polygon points="577,657 624,680 623,710 557,710" fill="#5a3480"/>
<polygon points="639,602 641,602 626,710 624,710" fill="#3a2a50"/>
<polygon points="645,602 703,602 682,686 638,657" fill="#392c5c"/>
<polygon points="638,657 682,686 672,710 630,710" fill="#6c3d8c"/>
<polygon points="703,602 727,602 697,710 672,710 682,686" fill="#864a9c"/>
<polygon points="727,602 750,602 742.5,630 720.6,626" fill="#5e9040"/>
<polygon points="720,626 765,644 752,710 697,710" fill="#3a2c5c"/>
<polygon points="750,602 780,602 780,657 765,710 752,710 765,644 742.5,630" fill="#6e3f8e"/>
<polygon points="760,602 802,602 763.5,710 760,710" fill="#6d3f8d"/>
<polygon points="772,602 800,602 795,621 778,618" fill="#5e6a8a"/>
<polygon points="802,602 807,602 767,710 762.6,710" fill="#4f8a3a"/>
<polygon points="807,602 1017,602 980,644 980,684 1000,670 1000,710 767,710" fill="#a85c34"/>
<polygon points="807,612 830,621 818,642 805.6,638.6" fill="#5f5a30"/>
<polygon points="818,653 844,642 865,661 842.5,693 816,688" fill="#545830"/>
<polygon points="780,670 815,660 812,710 775,710" fill="#925432"/>
<polygon points="858,663 874,670 853,710 839,710" fill="#b9a48c"/>
<polygon points="874,675 893,698 883,710 858,710" fill="#4c5430"/>
<polygon points="1000,625 1000,670 953,710 928.5,710 928.5,698" fill="#2f6a68"/>
<polygon points="886,710 897,695 909,710" fill="#3a7a78"/>
<polygon points="1000,670 958,710 1000,710" fill="#4a4a24"/>
<polygon points="1017,602 1040,602 1073,638.6 1020,691 980,647.4 980,644" fill="#4a8590"/>
<polygon points="980,647 996,670 980,684" fill="#2c6a62"/>
<polygon points="1040,602 1106,602 1126,624.6 1096,658 1073,638.6" fill="#4d8a38"/>
<polygon points="1106,602 1171,602 1138,635 1126,624.6" fill="#2c4c5c"/>
<polygon points="1073,638.6 1096,658 1119,679 1092,710 1022,710 1020,691" fill="#4a4c22"/>
<polygon points="1096,658 1126,624.6 1138,635 1119,679" fill="#5a4a26"/>
<polygon points="1138,635 1171,602 1201,602 1201,710 1092,710 1119,679" fill="#2c3018"/>
<polygon points="980,684 996,670 1020,691 1022,710 980,710" fill="#5a4a30"/>

<g stroke="#c07a48" stroke-width="2" fill="none" opacity=".8">
<path d="M820,603 L930,709"/><path d="M880,603 L965,690"/><path d="M930,603 L870,660"/><path d="M935,603 L985,645"/>
</g>
<filter id="noise" x="0" y="0" width="100%" height="100%"><feTurbulence type="fractalNoise" baseFrequency="0.09" numOctaves="3" seed="11"/><feColorMatrix type="matrix" values="0 0 0 0 0  0 0 0 0 0  0 0 0 0 0  0 0 0 0 1"/></filter>
<filter id="noise2" x="0" y="0" width="100%" height="100%"><feTurbulence type="fractalNoise" baseFrequency="0.09" numOctaves="3" seed="11"/><feColorMatrix type="matrix" values="1 0 0 0 0  1 0 0 0 0  1 0 0 0 0  0 0 0 0 1"/></filter>
<rect x="302" y="103" width="1064" height="607" filter="url(#noise2)" opacity=".35" style="mix-blend-mode:soft-light"/>
</svg>
</div>

<!-- ================= ATTRIBUTE TABLE ================= -->
<div class="a" style="left:147px;top:3px;width:1054px;height:600px;background:#eeebe7;border-radius:7px 7px 0 0;box-shadow:0 1px 6px rgba(0,0,0,.28)"><div class="a" style="left:0;top:0;width:1054px;height:600px;border-radius:7px 7px 0 0;overflow:hidden">
<div class="a" style="left:0;top:0;width:1054px;height:30px;background:#3c3b37"></div>
<div class="a" style="left:0;top:30px;width:1px;height:570px;background:#b3afa9;z-index:5"></div>
<div class="a" style="left:992.7px;top:6.2px;width:14.6px;height:14.6px;border-radius:50%;background:#504f4a"></div><div class="a" style="left:1012.7px;top:6.2px;width:14.6px;height:14.6px;border-radius:50%;background:#504f4a"></div><div class="a" style="left:1032.7px;top:6.2px;width:14.6px;height:14.6px;border-radius:50%;background:#504f4a"></div>
<div class="t" style="left:286px;top:8px;color:#84817a;font-weight:bold;font-size:14.5px;letter-spacing:.1px">Carta_uso_suolo :: Features Total: 77085, Filtered: 77085, Selected: 0</div>



<div class="a" style="left:0;top:30px;width:1054px;height:31px;background:linear-gradient(#f2f0ed,#ebe8e4)"></div>
<div class="a" style="left:9px;top:37px"><svg width="14" height="17"><path d="M10 1l3 2-8 12-3 1 0-3z" fill="#f1d33a" stroke="#a88a20" stroke-width=".8"/><path d="M2 13l3 2-3 1z" fill="#666"/></svg></div>
<div class="a" style="left:33px;top:37px"><svg width="16" height="17"><g fill="#e0ddd3" stroke="#cfcabb" stroke-width=".6"><rect x="1" y="3" width="13" height="3" rx="1"/><rect x="1" y="7" width="13" height="3" rx="1"/><rect x="1" y="11" width="13" height="3" rx="1"/></g><path d="M13 1l2 1.5-7 10-2 .5 0-2z" fill="#e3e1dc" stroke="#c8c4bc" stroke-width=".7"/></svg></div>
<div class="a" style="left:58px;top:37px"><svg width="16" height="17"><rect x="1" y="1" width="14" height="14" rx="1.5" fill="#dcdad5" stroke="#cbc8c2" stroke-width=".7"/><rect x="4" y="9" width="8" height="6" fill="#eeece8"/><path d="M9 15l5-5 1 1-5 5z" fill="#d8c8b8"/></svg></div>
<div class="a" style="left:83px;top:37px"><svg width="16" height="17"><path d="M2 7.5a6 6 0 0 1 10-4.3l2-2v6h-6l2-2a3.8 3.8 0 0 0-5.8 2.3zM14 9.5a6 6 0 0 1-10 4.3l-2 2v-6h6l-2 2a3.8 3.8 0 0 0 5.8-2.3z" fill="#3d8ee0"/></svg></div>
<div class="a" style="left:115px;top:37px"><svg width="17" height="17"><g fill="none" stroke="#d3d0c9"><rect x="1.5" y="2.5" width="13" height="11"/><path d="M1.5 6h13M1.5 9.5h13M6 6v7.5"/></g><rect x="10" y="10" width="6" height="6" fill="#dcd6c0"/></svg></div>
<div class="a" style="left:141px;top:37px"><svg width="14" height="17"><path d="M2 4h10l-1 12h-8z" fill="#eae6e2" stroke="#d9c9c4" stroke-width=".8"/><path d="M1 3h12M5 1.5h4" stroke="#d9c9c4"/></svg></div>
<div class="a" style="left:165px;top:37px"><svg width="16" height="17"><circle cx="12" cy="6" r="2.5" fill="none" stroke="#d0cdc7"/><circle cx="12" cy="12" r="2.5" fill="none" stroke="#d0cdc7"/><path d="M1 5l10 5M1 12l10-5" stroke="#d0cdc7"/></svg></div>
<div class="a" style="left:192px;top:37px"><svg width="13" height="17"><rect x="4.5" y="1.5" width="8" height="10" fill="#efedea" stroke="#d8d5cf"/><rect x=".5" y="5.5" width="8" height="10" fill="#efedea" stroke="#d8d5cf"/></svg></div>
<div class="a" style="left:218px;top:37px"><svg width="13" height="17"><rect x="1.5" y="2.5" width="10" height="13" fill="#efedea" stroke="#d8d5cf"/><rect x="4" y="1" width="5" height="3" fill="#d8d5cf"/></svg></div>
<div class="a" style="left:108px;top:38px;width:1px;height:15px;background:#d6d3ce;border-right:1px solid #fbfaf9;width:2px"></div>
<div class="a" style="left:239px;top:38px;width:2px;height:15px;background:#d6d3ce;border-right:1px solid #fbfaf9"></div>
<div class="a" style="left:0;top:61px;width:1040px;height:498px;background:#fff"></div>
<div class="a" style="left:1px;top:62px;width:1039px;height:21px;background:linear-gradient(#f7f6f5,#ebe9e6);border-bottom:1px solid #c3bfba"></div>
<div class="a" style="left:0;top:61px;width:1054px;height:1px;background:#c3bfba"></div>
<div class="a" style="left:147px;top:62px;width:1px;height:21px;background:#d2cfca"></div>
<div class="a" style="left:490px;top:62px;width:1px;height:21px;background:#d2cfca"></div>
<div class="a" style="left:590px;top:62px;width:1px;height:21px;background:#d2cfca"></div>
<div class="a" style="left:690px;top:62px;width:1px;height:21px;background:#d2cfca"></div>
<div class="a" style="left:790px;top:62px;width:1px;height:21px;background:#d2cfca"></div>
<div class="a" style="left:890px;top:62px;width:1px;height:21px;background:#d2cfca"></div>
<div class="a" style="left:990px;top:62px;width:1px;height:21px;background:#d2cfca"></div>
<div class="t" style="left:81px;top:66px;color:#111">COD</div>
<div class="a" style="left:48px;top:83px;width:992px;height:29px;background:#ffffff"></div>
<div class="a" style="left:1px;top:83px;width:46px;height:29px;background:linear-gradient(#f6f5f3,#ebe9e6)"></div>
<div class="a" style="left:1px;top:112px;width:1039px;height:1px;background:#d2cfca"></div>
<div class="t" style="left:3.6px;top:92px;color:#111">1</div>
<div class="t" style="right:910px;top:91px;color:#111">5123,0000…</div>
<div class="t" style="left:151px;top:82px;color:#111">Bacini con prevalente utilizzazione</div>
<div class="t" style="left:151px;top:98px;color:#111">produt…</div>
<div class="t" style="right:467px;top:91px;color:#111">1000,0000…</div>
<div class="t" style="right:367px;top:91px;color:#111">10,000000…</div>
<div class="t" style="right:267px;top:91px;color:#111">3,0000000…</div>
<div class="t" style="right:167px;top:91px;color:#111">31,000000…</div>
<div class="t" style="right:67px;top:91px;color:#111">312,00000…</div>
<div class="t" style="right:15px;top:91px;color:#111">0,000</div>
<div class="a" style="left:48px;top:113px;width:992px;height:29px;background:#f5f4f2"></div>
<div class="a" style="left:1px;top:113px;width:46px;height:29px;background:linear-gradient(#f6f5f3,#ebe9e6)"></div>
<div class="a" style="left:1px;top:142px;width:1039px;height:1px;background:#d2cfca"></div>
<div class="t" style="left:3.6px;top:122px;color:#111">2</div>
<div class="t" style="right:910px;top:121px;color:#111">312,00000…</div>
<div class="t" style="left:151px;top:121px;color:#111">Boschi di conifere</div>
<div class="t" style="right:467px;top:121px;color:#111">1000,0000…</div>
<div class="t" style="right:367px;top:121px;color:#111">10,000000…</div>
<div class="t" style="right:267px;top:121px;color:#111">3,0000000…</div>
<div class="t" style="right:167px;top:121px;color:#111">31,000000…</div>
<div class="t" style="right:67px;top:121px;color:#111">312,00000…</div>
<div class="t" style="right:15px;top:121px;color:#111">0,000</div>
<div class="a" style="left:48px;top:143px;width:992px;height:29px;background:#ffffff"></div>
<div class="a" style="left:1px;top:143px;width:46px;height:29px;background:linear-gradient(#f6f5f3,#ebe9e6)"></div>
<div class="a" style="left:1px;top:172px;width:1039px;height:1px;background:#d2cfca"></div>
<div class="t" style="left:3.6px;top:152px;color:#111">3</div>
<div class="t" style="right:910px;top:151px;color:#111">311,00000…</div>
<div class="t" style="left:151px;top:151px;color:#111">Boschi di latifoglie</div>
<div class="t" style="right:467px;top:151px;color:#111">1000,0000…</div>
<div class="t" style="right:367px;top:151px;color:#111">10,000000…</div>
<div class="t" style="right:267px;top:151px;color:#111">3,0000000…</div>
<div class="t" style="right:167px;top:151px;color:#111">31,000000…</div>
<div class="t" style="right:67px;top:151px;color:#111">312,00000…</div>
<div class="t" style="right:15px;top:151px;color:#111">0,000</div>
<div class="a" style="left:48px;top:173px;width:992px;height:29px;background:#f5f4f2"></div>
<div class="a" style="left:1px;top:173px;width:46px;height:29px;background:linear-gradient(#f6f5f3,#ebe9e6)"></div>
<div class="a" style="left:1px;top:202px;width:1039px;height:1px;background:#d2cfca"></div>
<div class="t" style="left:3.6px;top:182px;color:#111">4</div>
<div class="t" style="right:910px;top:181px;color:#111">222,00000…</div>
<div class="t" style="left:151px;top:181px;color:#111">Frutteti e frutteti minori</div>
<div class="t" style="right:467px;top:181px;color:#111">1000,0000…</div>
<div class="t" style="right:367px;top:181px;color:#111">10,000000…</div>
<div class="t" style="right:267px;top:181px;color:#111">3,0000000…</div>
<div class="t" style="right:167px;top:181px;color:#111">31,000000…</div>
<div class="t" style="right:67px;top:181px;color:#111">312,00000…</div>
<div class="t" style="right:15px;top:181px;color:#111">0,000</div>
<div class="a" style="left:48px;top:203px;width:992px;height:29px;background:#ffffff"></div>
<div class="a" style="left:1px;top:203px;width:46px;height:29px;background:linear-gradient(#f6f5f3,#ebe9e6)"></div>
<div class="a" style="left:1px;top:232px;width:1039px;height:1px;background:#d2cfca"></div>
<div class="t" style="left:3.6px;top:212px;color:#111">5</div>
<div class="t" style="right:910px;top:211px;color:#111">322,00000…</div>
<div class="t" style="left:151px;top:211px;color:#111">Cespuglieti ed arbusteti</div>
<div class="t" style="right:467px;top:211px;color:#111">1000,0000…</div>
<div class="t" style="right:367px;top:211px;color:#111">10,000000…</div>
<div class="t" style="right:267px;top:211px;color:#111">3,0000000…</div>
<div class="t" style="right:167px;top:211px;color:#111">31,000000…</div>
<div class="t" style="right:67px;top:211px;color:#111">312,00000…</div>
<div class="t" style="right:15px;top:211px;color:#111">0,000</div>
<div class="a" style="left:48px;top:233px;width:992px;height:29px;background:#f5f4f2"></div>
<div class="a" style="left:1px;top:233px;width:46px;height:29px;background:linear-gradient(#f6f5f3,#ebe9e6)"></div>
<div class="a" style="left:1px;top:262px;width:1039px;height:1px;background:#d2cfca"></div>
<div class="t" style="left:3.6px;top:242px;color:#111">6</div>
<div class="t" style="right:910px;top:241px;color:#111">231,00000…</div>
<div class="t" style="left:151px;top:241px;color:#111">Superfici a copertura erbacea densa</div>
<div class="t" style="right:467px;top:241px;color:#111">1000,0000…</div>
<div class="t" style="right:367px;top:241px;color:#111">10,000000…</div>
<div class="t" style="right:267px;top:241px;color:#111">3,0000000…</div>
<div class="t" style="right:167px;top:241px;color:#111">31,000000…</div>
<div class="t" style="right:67px;top:241px;color:#111">312,00000…</div>
<div class="t" style="right:15px;top:241px;color:#111">0,000</div>
<div class="a" style="left:48px;top:263px;width:992px;height:29px;background:#ffffff"></div>
<div class="a" style="left:1px;top:263px;width:46px;height:29px;background:linear-gradient(#f6f5f3,#ebe9e6)"></div>
<div class="a" style="left:1px;top:292px;width:1039px;height:1px;background:#d2cfca"></div>
<div class="t" style="left:3.6px;top:272px;color:#111">7</div>
<div class="t" style="right:910px;top:271px;color:#111">3241,0000…</div>
<div class="t" style="left:151px;top:271px;color:#111">Aree a ricolonizzazione naturale</div>
<div class="t" style="right:467px;top:271px;color:#111">1000,0000…</div>
<div class="t" style="right:367px;top:271px;color:#111">10,000000…</div>
<div class="t" style="right:267px;top:271px;color:#111">3,0000000…</div>
<div class="t" style="right:167px;top:271px;color:#111">31,000000…</div>
<div class="t" style="right:67px;top:271px;color:#111">312,00000…</div>
<div class="t" style="right:15px;top:271px;color:#111">0,000</div>
<div class="a" style="left:48px;top:293px;width:992px;height:29px;background:#f5f4f2"></div>
<div class="a" style="left:1px;top:293px;width:46px;height:29px;background:linear-gradient(#f6f5f3,#ebe9e6)"></div>
<div class="a" style="left:1px;top:322px;width:1039px;height:1px;background:#d2cfca"></div>
<div class="t" style="left:3.6px;top:302px;color:#111">8</div>
<div class="t" style="right:910px;top:301px;color:#111">2111,0000…</div>
<div class="t" style="left:151px;top:301px;color:#111">Seminativi semplici in aree non irrigue</div>
<div class="t" style="right:467px;top:301px;color:#111">1000,0000…</div>
<div class="t" style="right:367px;top:301px;color:#111">10,000000…</div>
<div class="t" style="right:267px;top:301px;color:#111">3,0000000…</div>
<div class="t" style="right:167px;top:301px;color:#111">31,000000…</div>
<div class="t" style="right:67px;top:301px;color:#111">312,00000…</div>
<div class="t" style="right:15px;top:301px;color:#111">0,000</div>
<div class="a" style="left:48px;top:323px;width:992px;height:29px;background:#ffffff"></div>
<div class="a" style="left:1px;top:323px;width:46px;height:29px;background:linear-gradient(#f6f5f3,#ebe9e6)"></div>
<div class="a" style="left:1px;top:352px;width:1039px;height:1px;background:#d2cfca"></div>
<div class="t" style="left:3.6px;top:332px;color:#111">9</div>
<div class="t" style="right:910px;top:331px;color:#111">311,00000…</div>
<div class="t" style="left:151px;top:331px;color:#111">Boschi di latifoglie</div>
<div class="t" style="right:467px;top:331px;color:#111">1000,0000…</div>
<div class="t" style="right:367px;top:331px;color:#111">10,000000…</div>
<div class="t" style="right:267px;top:331px;color:#111">3,0000000…</div>
<div class="t" style="right:167px;top:331px;color:#111">31,000000…</div>
<div class="t" style="right:67px;top:331px;color:#111">312,00000…</div>
<div class="t" style="right:15px;top:331px;color:#111">0,000</div>
<div class="a" style="left:48px;top:353px;width:992px;height:29px;background:#f5f4f2"></div>
<div class="a" style="left:1px;top:353px;width:46px;height:29px;background:linear-gradient(#f6f5f3,#ebe9e6)"></div>
<div class="a" style="left:1px;top:382px;width:1039px;height:1px;background:#d2cfca"></div>
<div class="t" style="left:3.6px;top:362px;color:#111">10</div>
<div class="t" style="right:910px;top:361px;color:#111">311,00000…</div>
<div class="t" style="left:151px;top:361px;color:#111">Boschi di latifoglie</div>
<div class="t" style="right:467px;top:361px;color:#111">1000,0000…</div>
<div class="t" style="right:367px;top:361px;color:#111">10,000000…</div>
<div class="t" style="right:267px;top:361px;color:#111">3,0000000…</div>
<div class="t" style="right:167px;top:361px;color:#111">31,000000…</div>
<div class="t" style="right:67px;top:361px;color:#111">312,00000…</div>
<div class="t" style="right:15px;top:361px;color:#111">0,000</div>
<div class="a" style="left:48px;top:383px;width:992px;height:29px;background:#ffffff"></div>
<div class="a" style="left:1px;top:383px;width:46px;height:29px;background:linear-gradient(#f6f5f3,#ebe9e6)"></div>
<div class="a" style="left:1px;top:412px;width:1039px;height:1px;background:#d2cfca"></div>
<div class="t" style="left:3.6px;top:392px;color:#111">11</div>
<div class="t" style="right:910px;top:391px;color:#111">231,00000…</div>
<div class="t" style="left:151px;top:391px;color:#111">Superfici a copertura erbacea densa</div>
<div class="t" style="right:467px;top:391px;color:#111">1000,0000…</div>
<div class="t" style="right:367px;top:391px;color:#111">10,000000…</div>
<div class="t" style="right:267px;top:391px;color:#111">3,0000000…</div>
<div class="t" style="right:167px;top:391px;color:#111">31,000000…</div>
<div class="t" style="right:67px;top:391px;color:#111">312,00000…</div>
<div class="t" style="right:15px;top:391px;color:#111">0,000</div>
<div class="a" style="left:48px;top:413px;width:992px;height:29px;background:#f5f4f2"></div>
<div class="a" style="left:1px;top:413px;width:46px;height:29px;background:linear-gradient(#f6f5f3,#ebe9e6)"></div>
<div class="a" style="left:1px;top:442px;width:1039px;height:1px;background:#d2cfca"></div>
<div class="t" style="left:3.6px;top:422px;color:#111">12</div>
<div class="t" style="right:910px;top:421px;color:#111">321,00000…</div>
<div class="t" style="left:151px;top:421px;color:#111">Aree a pascolo naturale e praterie</div>
<div class="t" style="right:467px;top:421px;color:#111">1000,0000…</div>
<div class="t" style="right:367px;top:421px;color:#111">10,000000…</div>
<div class="t" style="right:267px;top:421px;color:#111">3,0000000…</div>
<div class="t" style="right:167px;top:421px;color:#111">31,000000…</div>
<div class="t" style="right:67px;top:421px;color:#111">312,00000…</div>
<div class="t" style="right:15px;top:421px;color:#111">0,000</div>
<div class="a" style="left:48px;top:443px;width:992px;height:29px;background:#ffffff"></div>
<div class="a" style="left:1px;top:443px;width:46px;height:29px;background:linear-gradient(#f6f5f3,#ebe9e6)"></div>
<div class="a" style="left:1px;top:472px;width:1039px;height:1px;background:#d2cfca"></div>
<div class="t" style="left:3.6px;top:452px;color:#111">13</div>
<div class="t" style="right:910px;top:451px;color:#111">231,00000…</div>
<div class="t" style="left:151px;top:451px;color:#111">Superfici a copertura erbacea densa</div>
<div class="t" style="right:467px;top:451px;color:#111">3086,2910…</div>
<div class="t" style="right:367px;top:451px;color:#111">29,526000…</div>
<div class="t" style="right:267px;top:451px;color:#111">2,0000000…</div>
<div class="t" style="right:167px;top:451px;color:#111">23,000000…</div>
<div class="t" style="right:67px;top:451px;color:#111">231,00000…</div>
<div class="t" style="right:15px;top:451px;color:#111">0,000</div>
<div class="a" style="left:48px;top:473px;width:992px;height:29px;background:#f5f4f2"></div>
<div class="a" style="left:1px;top:473px;width:46px;height:29px;background:linear-gradient(#f6f5f3,#ebe9e6)"></div>
<div class="a" style="left:1px;top:502px;width:1039px;height:1px;background:#d2cfca"></div>
<div class="t" style="left:3.6px;top:482px;color:#111">14</div>
<div class="t" style="right:910px;top:481px;color:#111">322,00000…</div>
<div class="t" style="left:151px;top:481px;color:#111">Cespuglieti ed arbusteti</div>
<div class="t" style="right:467px;top:481px;color:#111">812,57600…</div>
<div class="t" style="right:367px;top:481px;color:#111">3,9180000…</div>
<div class="t" style="right:267px;top:481px;color:#111">3,0000000…</div>
<div class="t" style="right:167px;top:481px;color:#111">32,000000…</div>
<div class="t" style="right:67px;top:481px;color:#111">322,00000…</div>
<div class="t" style="right:15px;top:481px;color:#111">0,000</div>
<div class="a" style="left:48px;top:503px;width:992px;height:29px;background:#ffffff"></div>
<div class="a" style="left:1px;top:503px;width:46px;height:29px;background:linear-gradient(#f6f5f3,#ebe9e6)"></div>
<div class="a" style="left:1px;top:532px;width:1039px;height:1px;background:#d2cfca"></div>
<div class="t" style="left:3.6px;top:512px;color:#111">15</div>
<div class="t" style="right:910px;top:511px;color:#111">312,00000…</div>
<div class="t" style="left:151px;top:511px;color:#111">Boschi di conifere</div>
<div class="t" style="right:467px;top:511px;color:#111">4649,0540…</div>
<div class="t" style="right:367px;top:511px;color:#111">22,283000…</div>
<div class="t" style="right:267px;top:511px;color:#111">3,0000000…</div>
<div class="t" style="right:167px;top:511px;color:#111">31,000000…</div>
<div class="t" style="right:67px;top:511px;color:#111">312,00000…</div>
<div class="t" style="right:15px;top:511px;color:#111">0,000</div>
<div class="a" style="left:48px;top:533px;width:992px;height:25px;background:#f5f4f2"></div>
<div class="a" style="left:1px;top:533px;width:46px;height:25px;background:linear-gradient(#f6f5f3,#ebe9e6)"></div>
<div class="t" style="left:3.6px;top:542px;color:#111">16</div>
<div class="t" style="right:910px;top:541px;color:#111">322,00000…</div>
<div class="t" style="left:151px;top:541px;color:#111">Cespuglieti ed arbusteti</div>
<div class="t" style="right:467px;top:541px;color:#111">2756,6130…</div>
<div class="t" style="right:367px;top:541px;color:#111">8,3290000…</div>
<div class="t" style="right:267px;top:541px;color:#111">3,0000000…</div>
<div class="t" style="right:167px;top:541px;color:#111">32,000000…</div>
<div class="t" style="right:67px;top:541px;color:#111">322,00000…</div>
<div class="t" style="right:15px;top:541px;color:#111">0,000</div>
<div class="a" style="left:47px;top:83px;width:1px;height:475px;background:#d2cfca"></div>
<div class="a" style="left:147px;top:83px;width:1px;height:475px;background:#d2cfca"></div>
<div class="a" style="left:490px;top:83px;width:1px;height:475px;background:#d2cfca"></div>
<div class="a" style="left:590px;top:83px;width:1px;height:475px;background:#d2cfca"></div>
<div class="a" style="left:690px;top:83px;width:1px;height:475px;background:#d2cfca"></div>
<div class="a" style="left:790px;top:83px;width:1px;height:475px;background:#d2cfca"></div>
<div class="a" style="left:890px;top:83px;width:1px;height:475px;background:#d2cfca"></div>
<div class="a" style="left:990px;top:83px;width:1px;height:475px;background:#d2cfca"></div>
<div class="a" style="left:1040px;top:61px;width:13px;height:497px;background:#dcdad6;border-left:1px solid #cfccc7"></div>
<div class="a" style="left:1040px;top:545px;width:13px;height:13px;background:#f4f3f1;border-left:1px solid #cfccc7;border-top:1px solid #cfccc7"></div>
<div class="a" style="left:1042px;top:550px"><svg width="9" height="5"><path d="M0 0h9l-4.5 5z" fill="#555"/></svg></div>
<div class="a" style="left:1px;top:558px;width:1039px;height:15px;background:#dedcd8;border-top:1px solid #cfccc7;border-bottom:1px solid #cfccc7"></div><div class="a" style="left:1px;top:559px;width:14px;height:13px;background:#f4f3f1"></div><div class="a" style="left:1026px;top:559px;width:13px;height:13px;background:#f4f3f1"></div>
<div class="a" style="left:74px;top:559px;width:537px;height:13px;background:linear-gradient(#fbfaf9,#f1efec);border-left:1px solid #cfccc7;border-right:1px solid #cfccc7"></div>
<div class="a" style="left:15px;top:558px;width:1px;height:14px;background:#cfccc7"></div>
<div class="a" style="left:1025px;top:558px;width:1px;height:14px;background:#cfccc7"></div>
<div class="a" style="left:1039px;top:558px;width:14px;height:14px;background:#eeebe7;border-left:1px solid #cfccc7"></div>
<div class="a" style="left:5px;top:561px"><svg width="5" height="9"><path d="M5 0v9L0 4.5z" fill="#444"/></svg></div>
<div class="a" style="left:1030px;top:561px"><svg width="5" height="9"><path d="M0 0v9l5-4.5z" fill="#444"/></svg></div>
<div class="btn" style="left:3.5px;top:573.5px;width:154.5px;height:23px;border-radius:4px"></div>
<div class="a" style="left:10px;top:577px"><svg width="16" height="18"><path d="M1 1.5h14l-5 6v9l-4-2v-7z" fill="#6b9bd4" stroke="#4f7bb3" stroke-width=".8"/><rect x="1" y="1" width="14" height="2.5" fill="#f3d54a"/></svg></div>
<div class="t" style="left:28px;top:579px;color:#111">Show All Features</div>
<div class="a" style="left:151px;top:591px"><svg width="6" height="3"><path d="M0 0h6l-3 3z" fill="#333"/></svg></div>
<div class="a" style="left:1006px;top:577px"><svg width="18" height="18"><rect x="1" y="2" width="16" height="14" fill="none" stroke="#8aa8cc"/><path d="M3 5h3M3 12h3M8 4h8v4h-8zM8 10h8v4h-8z" fill="none" stroke="#8aa8cc"/></svg></div>
<div class="a" style="left:1028px;top:573px;width:24px;height:25px;border:1px solid #bdb9b3;border-radius:3px;background:#dedcd8"></div>
<div class="a" style="left:1031px;top:577px"><svg width="18" height="18"><rect x="1.5" y="1.5" width="15" height="15" fill="#eef3fa" stroke="#6b9bd4"/><path d="M1.5 5h15M1.5 8.5h15M1.5 12h15M5 5v11.5" stroke="#6b9bd4"/></svg></div>
</div>
</div>

<!-- ================= DIALOG ================= -->
<div class="a" style="left:394px;top:15px;width:930px;height:439px;background:#eeebe7;border-radius:7px 7px 0 0;box-shadow:0 3px 14px rgba(0,0,0,.38)">
<div class="a" style="left:0;top:0;width:930px;height:30px;border-radius:7px 7px 0 0;background:linear-gradient(#5a5852,#3e3d39)"></div>
<div class="t" style="left:326px;top:8px;color:#dfdbd2;font-weight:bold;font-size:14.5px;letter-spacing:0">Select by Expression - Carta_uso_suolo</div>
<div class="a" style="left:908px;top:7px;width:16px;height:16px;border-radius:50%;background:radial-gradient(circle at 50% 35%,#f37a4a,#df4f22);box-shadow:0 0 0 1px rgba(0,0,0,.25)"></div>
<div class="a" style="left:911px;top:10px"><svg width="10" height="10"><path d="M1.5 1.5l7 7M8.5 1.5l-7 7" stroke="#3a2a20" stroke-width="1.3"/></svg></div>
<div class="a" style="left:3px;top:60px;width:924px;height:1px;background:#bfbbb5"></div><div class="a" style="left:3px;top:61px;width:924px;height:1px;background:#f9f8f6"></div>
<div class="a" style="left:102px;top:35px;width:127px;height:26px;background:linear-gradient(#ebe9e6,#e4e2de);border:1px solid #bfbbb5;border-radius:3px 3px 0 0"></div>
<div class="a" style="left:3px;top:33px;width:99px;height:28px;background:linear-gradient(#fefefe,#f6f5f3);border:1px solid #bfbbb5;border-bottom:none;border-radius:3px 3px 0 0"></div>
<div class="t" style="left:15.5px;top:41px;color:#111">Expression</div>
<div class="t" style="left:113px;top:42px;color:#111">Function Editor</div>
<div class="btn" style="left:12.3px;top:80.5px;width:28.6px;height:24px"></div>
<div class="t" style="left:12.3px;top:86px;width:28.6px;text-align:center;color:#111;letter-spacing:0">=</div>
<div class="btn" style="left:42.5px;top:80.5px;width:28.6px;height:24px"></div>
<div class="t" style="left:42.5px;top:86px;width:28.6px;text-align:center;color:#111;letter-spacing:0">+</div>
<div class="btn" style="left:72.7px;top:80.5px;width:28.6px;height:24px"></div>
<div class="t" style="left:72.7px;top:86px;width:28.6px;text-align:center;color:#111;letter-spacing:0">-</div>
<div class="btn" style="left:102.9px;top:80.5px;width:28.6px;height:24px"></div>
<div class="t" style="left:102.9px;top:86px;width:28.6px;text-align:center;color:#111;letter-spacing:0">/</div>
<div class="btn" style="left:133.1px;top:80.5px;width:28.6px;height:24px"></div>
<div class="t" style="left:133.1px;top:86px;width:28.6px;text-align:center;color:#111;letter-spacing:0">*</div>
<div class="btn" style="left:163.3px;top:80.5px;width:28.6px;height:24px"></div>
<div class="t" style="left:163.3px;top:86px;width:28.6px;text-align:center;color:#111;letter-spacing:0">^</div>
<div class="btn" style="left:193.5px;top:80.5px;width:28.6px;height:24px"></div>
<div class="t" style="left:193.5px;top:86px;width:28.6px;text-align:center;color:#111;letter-spacing:0">||</div>
<div class="btn" style="left:223.7px;top:80.5px;width:28.6px;height:24px"></div>
<div class="t" style="left:223.7px;top:86px;width:28.6px;text-align:center;color:#111;letter-spacing:0">(</div>
<div class="btn" style="left:253.9px;top:80.5px;width:28.6px;height:24px"></div>
<div class="t" style="left:253.9px;top:86px;width:28.6px;text-align:center;color:#111;letter-spacing:0">)</div>
<div class="btn" style="left:284.1px;top:80.5px;width:28.6px;height:24px"></div>
<div class="t" style="left:284.1px;top:86px;width:28.6px;text-align:center;color:#111;letter-spacing:0">'\n'</div>
<div class="a" style="left:12px;top:111px;width:320px;height:262px;background:#fff;border:1px solid #b7b3ad"></div>
<div class="t mono" style="left:14px;top:114px;white-space:pre"> <span style="color:#eab700">"DESCRIZION"</span> <span style="color:#4271ae">=</span>  <span style="color:#718c00">'Aree a pascolo</span></div>
<div class="t mono" style="left:14px;top:132px;white-space:pre"><span style="color:#718c00">naturale e praterie d''alta quota'</span>  <span style="color:#8959a8;font-weight:bold">AND</span></div>
<div class="t mono" style="left:14px;top:150px;white-space:pre">  <span style="color:#333">$</span><span style="color:#3e999f">area</span> <span style="color:#4271ae">&gt;</span> <span style="color:#c82829">25000</span></div>
<div class="a" style="left:342px;top:227px;width:2px;height:16px;background:radial-gradient(circle,#aaa69f .6px,transparent .9px) 0 0/2px 3px"></div>
<div class="a" style="left:665px;top:227px;width:2px;height:16px;background:radial-gradient(circle,#aaa69f .6px,transparent .9px) 0 0/2px 3px"></div>
<div class="t" style="left:12.5px;top:381.5px;color:#111">Output preview:&nbsp; 0</div>
<div class="a" style="left:354px;top:71px;width:223px;height:25px;background:#fff;border:1px solid #b3afa9;border-radius:4px"></div>
<div class="a" style="left:363px;top:76.5px"><svg width="13" height="13"><circle cx="5.2" cy="5.2" r="4.2" fill="none" stroke="#858585" stroke-width="1.2"/><path d="M8.2 8.2l3.8 3.8" stroke="#858585" stroke-width="1.5"/></svg></div>
<div class="t" style="left:383px;top:77px;color:#8a8a8a">Search…</div>
<div class="btn" style="left:583px;top:71px;width:81px;height:25px"></div>
<div class="t" style="left:587.5px;top:77px;color:#b7bcc4">Show Help</div>
<div class="a" style="left:354px;top:102px;width:310px;height:294px;background:#fff;border:1px solid #b7b3ad;overflow:hidden">
<div class="a" style="left:20px;top:0px;width:274px;height:17px;background:#ececec"></div>
<div class="a" style="left:7px;top:4px"><svg width="6" height="10"><path d="M0 0l5.5 5L0 10z" fill="#333"/></svg></div>
<div class="t" style="left:24px;top:2px;color:#111">Color</div>
<div class="a" style="left:20px;top:17px;width:274px;height:17px;background:#ececec"></div>
<div class="a" style="left:7px;top:21px"><svg width="6" height="10"><path d="M0 0l5.5 5L0 10z" fill="#333"/></svg></div>
<div class="t" style="left:24px;top:19px;color:#111">Conditionals</div>
<div class="a" style="left:20px;top:34px;width:274px;height:17px;background:#ececec"></div>
<div class="a" style="left:7px;top:38px"><svg width="6" height="10"><path d="M0 0l5.5 5L0 10z" fill="#333"/></svg></div>
<div class="t" style="left:24px;top:36px;color:#111">Conversions</div>
<div class="a" style="left:20px;top:51px;width:274px;height:17px;background:#ececec"></div>
<div class="a" style="left:7px;top:55px"><svg width="6" height="10"><path d="M0 0l5.5 5L0 10z" fill="#333"/></svg></div>
<div class="t" style="left:24px;top:53px;color:#111">Date and Time</div>
<div class="a" style="left:20px;top:68px;width:274px;height:17px;background:#ececec"></div>
<div class="a" style="left:7px;top:72px"><svg width="6" height="10"><path d="M0 0l5.5 5L0 10z" fill="#333"/></svg></div>
<div class="t" style="left:24px;top:70px;color:#111">Fields and Values</div>
<div class="a" style="left:20px;top:85px;width:274px;height:17px;background:#ececec"></div>
<div class="a" style="left:7px;top:89px"><svg width="6" height="10"><path d="M0 0l5.5 5L0 10z" fill="#333"/></svg></div>
<div class="t" style="left:24px;top:87px;color:#111">Files and Paths</div>
<div class="a" style="left:20px;top:102px;width:274px;height:17px;background:#ececec"></div>
<div class="a" style="left:7px;top:106px"><svg width="6" height="10"><path d="M0 0l5.5 5L0 10z" fill="#333"/></svg></div>
<div class="t" style="left:24px;top:104px;color:#111">Fuzzy Matching</div>
<div class="a" style="left:20px;top:119px;width:274px;height:17px;background:#ececec"></div>
<div class="a" style="left:7px;top:123px"><svg width="6" height="10"><path d="M0 0l5.5 5L0 10z" fill="#333"/></svg></div>
<div class="t" style="left:24px;top:121px;color:#111">General</div>
<div class="a" style="left:0;top:136px;width:294px;height:17px;background:#308cc6"></div>
<div class="a" style="left:5px;top:142px"><svg width="10" height="6"><path d="M0 0h10l-5 6z" fill="#1a2a3a"/></svg></div>
<div class="a" style="left:19px;top:136px;width:1px;height:17px;background:#5aa4d4"></div>
<div class="t" style="left:24px;top:138px;color:#e8f1f8">Geometry</div>
<div class="t" style="left:43px;top:155px;color:#111">angle_at_vertex</div>
<div class="t" style="left:43px;top:172px;color:#111">$area</div>
<div class="t" style="left:43px;top:189px;color:#111">area</div>
<div class="t" style="left:43px;top:206px;color:#111">azimuth</div>
<div class="t" style="left:43px;top:223px;color:#111">boundary</div>
<div class="t" style="left:43px;top:240px;color:#111">bounds</div>
<div class="t" style="left:43px;top:257px;color:#111">bounds_height</div>
<div class="t" style="left:43px;top:274px;color:#111">bounds_width</div>
<div class="t" style="left:43px;top:291px;color:#111">centroid</div>
<div class="a" style="left:294px;top:0;width:14px;height:292px;background:#dcdad6;border-left:1px solid #cfccc7"></div>
<div class="a" style="left:294px;top:0;width:14px;height:14px;background:#f6f5f3;border-left:1px solid #cfccc7;border-bottom:1px solid #cfccc7"></div>
<div class="a" style="left:297px;top:5px"><svg width="9" height="5"><path d="M0 5h9L4.5 0z" fill="#555"/></svg></div>
<div class="a" style="left:294px;top:17px;width:14px;height:39px;background:linear-gradient(90deg,#fcfcfb,#eeece9);border:1px solid #cfccc7"></div>
<div class="a" style="left:294px;top:279px;width:14px;height:13px;background:#f6f5f3;border-left:1px solid #cfccc7;border-top:1px solid #cfccc7"></div>
<div class="a" style="left:297px;top:284px"><svg width="9" height="5"><path d="M0 0h9L4.5 5z" fill="#555"/></svg></div>
</div>
<div class="a" style="left:677px;top:80px;width:232px;height:307px;background:#fff;border:1px solid #b7b3ad"></div>
<div class="a" style="left:682px;top:85px;width:222px;height:21px;background:#f3f3f3"></div>
<div class="t" style="right:26.5px;top:86px;color:#93b023;font-weight:bold;font-size:18px;letter-spacing:0">group geometry</div>
<div class="t" style="left:682px;top:120.0px;color:#111">This group contains functions</div>
<div class="t" style="left:682px;top:136.7px;color:#111">that operate on geometry</div>
<div class="t" style="left:682px;top:153.4px;color:#111">objects e.g length, area.</div>
<div class="btn" style="left:3.5px;top:411.5px;width:79px;height:24px"></div>
<div class="a" style="left:18px;top:415px"><svg width="16" height="16"><defs><radialGradient id="hq" cx="40%" cy="30%"><stop offset="0" stop-color="#7fb3e6"/><stop offset="1" stop-color="#2c6db4"/></radialGradient></defs><circle cx="8" cy="8" r="7.8" fill="url(#hq)"/><text x="8" y="12.5" font-size="12" fill="#fff" text-anchor="middle" font-family="Liberation Sans">?</text></svg></div>
<div class="t" style="left:35px;top:417px;color:#111">Help</div>
<div class="btn" style="left:684px;top:411px;width:139px;height:24px"></div>
<div class="btn" style="left:823.5px;top:411px;width:11.5px;height:24px"></div>
<div class="a" style="left:825px;top:421px"><svg width="9" height="5"><path d="M0 0h9L4.5 5z" fill="#444"/></svg></div>
<div class="a" style="left:690px;top:415px"><svg width="15" height="16"><rect x="4.5" y="5" width="9.5" height="9.5" fill="#f4de3a" stroke="#d4b820" stroke-width=".6"/><path d="M7.5 1.8C5 .8 2 2 2.8 4.2 3.2 5.4 4.6 5.6 5.6 5.6 3.8 5.6 1.5 6.2 1.8 8.2 2.2 10.4 5.2 10.6 7.2 9.6" fill="none" stroke="#5c2d82" stroke-width="1.4"/></svg></div>
<div class="t" style="left:709px;top:417px;color:#111">Select Features</div>
<div class="btn" style="left:847px;top:411px;width:80px;height:25px"></div>
<div class="t" style="left:868px;top:417px;color:#111">Close</div>
<div class="a" style="left:868px;top:430px;width:9px;height:1px;background:#111"></div>
</div>
<div class="a" style="left:0;top:0;width:1px;height:742px;background:linear-gradient(#ef5a24,#c2201c)"></div>
</body></html>
